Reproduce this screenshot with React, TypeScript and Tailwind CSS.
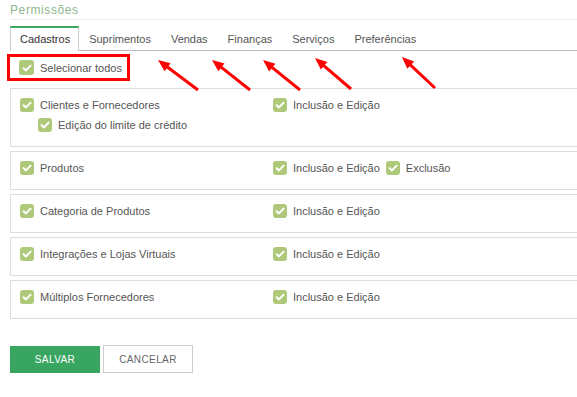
import React from "react";

function Check({ size = 14 }: { size?: number }) {
  return (
    <span
      className="inline-flex shrink-0 items-center justify-center rounded-[3px] bg-[#afc97b]"
      style={{ width: size, height: size }}
    >
      <svg width="10" height="10" viewBox="0 0 10 10">
        <path d="M1.6 5.2 L4 7.4 L8.6 2.6" fill="none" stroke="#fff" strokeWidth="2" strokeLinecap="round" strokeLinejoin="round" />
      </svg>
    </span>
  );
}

function Item({ label }: { label: string }) {
  return (
    <div className="flex items-center gap-[6px] h-[14px]">
      <Check />
      <span className="text-[11px] leading-[14px] text-[#555] whitespace-nowrap">{label}</span>
    </div>
  );
}

type Row = { left: string; right: string[]; sub?: string };

const rows: Row[] = [
  { left: "Clientes e Fornecedores", right: ["Inclusão e Edição"], sub: "Edição do limite de crédito" },
  { left: "Produtos", right: ["Inclusão e Edição", "Exclusão"] },
  { left: "Categoria de Produtos", right: ["Inclusão e Edição"] },
  { left: "Integrações e Lojas Virtuais", right: ["Inclusão e Edição"] },
  { left: "Múltiplos Fornecedores", right: ["Inclusão e Edição"] },
];

const tabs = ["Cadastros", "Suprimentos", "Vendas", "Finanças", "Serviços", "Preferências"];

const arrows = [
  { x1: 198, y1: 90, x2: 158, y2: 60 },
  { x1: 250, y1: 90, x2: 212, y2: 60 },
  { x1: 300, y1: 90, x2: 263, y2: 60 },
  { x1: 351, y1: 89, x2: 315, y2: 58 },
  { x1: 435, y1: 88, x2: 402, y2: 57 },
];

function Arrow({ x1, y1, x2, y2 }: { x1: number; y1: number; x2: number; y2: number }) {
  const dx = x2 - x1;
  const dy = y2 - y1;
  const len = Math.hypot(dx, dy);
  const ux = dx / len;
  const uy = dy / len;
  const hl = 12;
  const hw = 5;
  const bx = x2 - ux * hl;
  const by = y2 - uy * hl;
  const px = -uy;
  const py = ux;
  const pts = `${x2},${y2} ${bx + px * hw},${by + py * hw} ${bx - px * hw},${by - py * hw}`;
  return (
    <g>
      <line x1={x1} y1={y1} x2={bx + ux * 2} y2={by + uy * 2} stroke="#ff0000" strokeWidth="3" />
      <polygon points={pts} fill="#ff0000" />
    </g>
  );
}

export default function App() {
  return (
    <div className="relative w-[577px] h-[397px] overflow-hidden bg-white font-['Liberation_Sans',Arial,sans-serif]">
      <div className="pl-[10px]">
        <div className="h-[20px] border-b border-[#eee] text-[12px] leading-[20px] tracking-[0.6px] text-[#8db78d]">
          Permissões
        </div>

        <div className="mt-[6px] flex h-[25px] w-[620px] border-b border-[#bbb]">
          {tabs.map((t, i) =>
            i === 0 ? (
              <div
                key={t}
                className="mb-[-1px] h-[25px] border-t-2 border-x border-t-[#3aa760] border-x-[#ccc] bg-white pl-[9px] pr-[8px] pt-[4px] text-[11px] leading-[14px] text-[#333]"
              >
                {t}
              </div>
            ) : (
              <div
                key={t}
                className="h-[24px] border-t-2 border-transparent px-[10px] pt-[4px] text-[11px] leading-[14px] text-[#555]"
              >
                {t}
              </div>
            )
          )}
        </div>

        <div className="ml-[-3px] mt-[3px] flex h-[27px] w-[123px] items-center gap-[6px] border-[3px] border-[#ff0000] pl-[9px]">
          <Check size={15} />
          <span className="text-[11px] leading-[14px] text-[#555] whitespace-nowrap">Selecionar todos</span>
        </div>

        <div className="mt-[7px] flex flex-col gap-[4px]">
          {rows.map((r) => (
            <div key={r.left} className="w-[620px] border border-r-0 border-[#ddd] pl-[9px] pt-[9px] pb-[14px]">
              <div className="flex">
                <div className="w-[253px]">
                  <Item label={r.left} />
                  {r.sub && (
                    <div className="mt-[6px] pl-[18px]">
                      <Item label={r.sub} />
                    </div>
                  )}
                </div>
                <div className="flex gap-[6px]">
                  {r.right.map((x) => (
                    <Item key={x} label={x} />
                  ))}
                </div>
              </div>
            </div>
          ))}
        </div>

        <div className="mt-[26px] flex items-start gap-[3px]">
          <button className="mt-[1px] h-[27px] w-[90px] bg-[#38a661] text-[10px] tracking-[0.4px] text-white">
            SALVAR
          </button>
          <button className="h-[28px] w-[90px] border border-[#ccc] bg-white text-[10px] tracking-[0.4px] text-[#666]">
            CANCELAR
          </button>
        </div>
      </div>

      <svg className="pointer-events-none absolute left-0 top-0" width="577" height="397">
        {arrows.map((a, i) => (
          <Arrow key={i} {...a} />
        ))}
      </svg>
    </div>
  );
}
